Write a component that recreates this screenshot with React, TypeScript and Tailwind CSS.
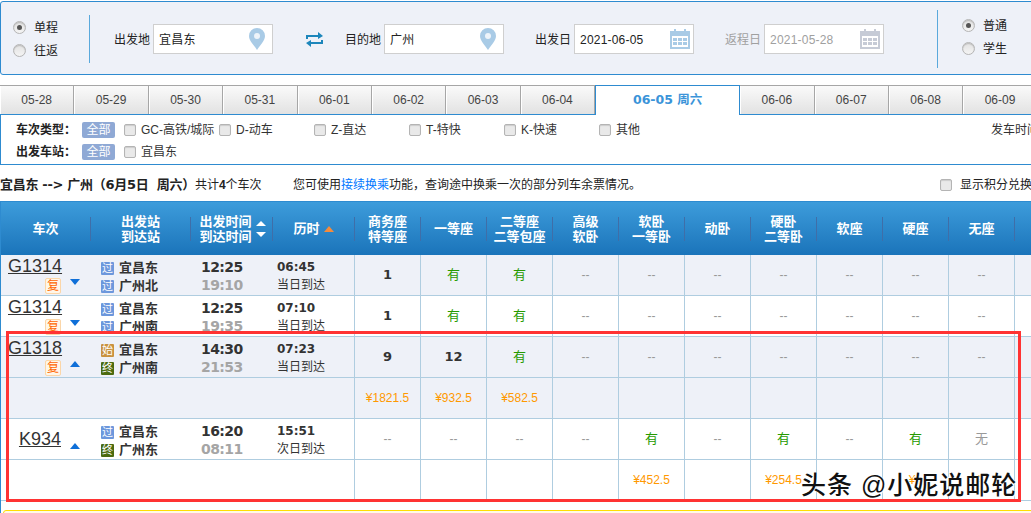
import React from 'react';

const FONT = "font-['Liberation_Sans','Noto_Sans_CJK_SC',sans-serif]";
const COLS = 'grid grid-cols-[90px_100px_82px_82px_repeat(11,66px)]';

const Radio = ({ on }: { on?: boolean }) => (
  <span className="flex h-[13px] w-[13px] items-center justify-center rounded-full border border-[#b5b5b5] bg-gradient-to-b from-[#e2e2e2] to-[#f4f4f4] shadow-[inset_0_1px_1px_#bbb]">
    {on && <span className="h-[5px] w-[5px] rounded-full bg-[#555]" />}
  </span>
);

const Checkbox = () => (
  <span className="block h-3 w-3 shrink-0 rounded-[2px] border border-[#b4b4b4] bg-[#e9e9e9] shadow-[inset_0_1px_1px_#ccc]" />
);

const Pin = () => (
  <svg width="16" height="22" viewBox="0 0 16 22" className="shrink-0">
    <path d="M8 0a8 8 0 0 0-8 8c0 5 5 9 8 14 3-5 8-9 8-14a8 8 0 0 0-8-8z" fill="#a9cbe6" />
    <circle cx="8" cy="8" r="3" fill="#eef4fa" />
  </svg>
);

const Calendar = ({ color }: { color: string }) => (
  <svg width="20" height="20" viewBox="0 0 20 20" className="shrink-0">
    <path d="M0 2h4V0h2v2h8V0h2v2h4v18H0z" fill={color} />
    <rect x="2" y="7" width="16" height="11" fill="#fff" />
    <path d="M3 9h4v3H3zM8 9h4v3H8zM13 9h4v3h-4zM3 13h4v3H3zM8 13h4v3H8zM13 13h4v3h-4z" fill={color} />
  </svg>
);

const Swap = () => (
  <svg width="17" height="15" viewBox="0 0 17 15">
    <path d="M0 7V3h12V0l5 4-5 3V5H2v2zM17 8v4H5v3L0 11l5-3v2h10V8z" fill="#1c86bb" />
  </svg>
);

const Field = ({ label, value, muted, calendar }: { label: string; value: string; muted?: boolean; calendar?: boolean }) => (
  <div className={`flex items-center gap-[3px] ${muted ? 'text-[#a0a0a0]' : 'text-[#222]'}`}>
    <span className="pt-[2px] text-xs">{label}</span>
    <div className="flex h-[30px] w-[120px] items-center justify-between border border-[#cfcfcf] bg-white pl-[5px] pr-[3px]">
      <span className="pt-[2px] text-xs tracking-[0.2px]">{value}</span>
      {calendar ? <Calendar color={muted ? '#c6cbd6' : '#a9cbe6'} /> : <span className="pr-1"><Pin /></span>}
    </div>
  </div>
);

const tabs = ['05-28', '05-29', '05-30', '05-31', '06-01', '06-02', '06-03', '06-04'];
const tabsAfter = ['06-06', '06-07', '06-08', '06-09'];

const Tab = ({ label }: { label: string }) => (
  <div className="flex h-full w-[74.4px] shrink-0 items-center justify-center border-r border-t border-[#a6a6a6] bg-gradient-to-b from-[#fafafa] to-[#e2e2e2] text-xs text-[#444] shadow-[inset_1px_0_0_#fff]">
    {label}
  </div>
);

const filters = ['GC-高铁/城际', 'D-动车', 'Z-直达', 'T-特快', 'K-快速', '其他'];

const AllBadge = () => (
  <span className="mr-[9px] ml-[1px] flex h-4 w-[33px] shrink-0 items-center justify-center rounded-[2px] bg-[#8fa9d5] text-xs text-white">全部</span>
);

const headers: string[][] = [
  ['车次'], ['出发站', '到达站'], ['出发时间', '到达时间'], ['历时'],
  ['商务座', '特等座'], ['一等座'], ['二等座', '二等包座'], ['高级', '软卧'], ['软卧', '一等卧'],
  ['动卧'], ['硬卧', '二等卧'], ['软座'], ['硬座'], ['无座'], [],
];

const Tag = ({ text, tone }: { text: string; tone: string }) => (
  <span className={`flex h-[13px] w-[13px] items-center justify-center rounded-[1px] text-[11px] font-normal leading-none text-white ${tone}`}>{text}</span>
);

const TONES: Record<string, string> = { 过: 'bg-[#6c97dc]', 始: 'bg-[#c9923f]', 终: 'bg-[#4a6a10]' };

type Train = {
  no: string; fu?: boolean; open?: boolean; from: string; fromTag: string; to: string; toTag: string;
  dep: string; arr: string; dur: string; day: string; seats: string[]; white?: boolean;
};

const trains: Train[] = [
  { no: 'G1314', fu: true, from: '宜昌东', fromTag: '过', to: '广州北', toTag: '过', dep: '12:25', arr: '19:10', dur: '06:45', day: '当日到达',
    seats: ['1', '有', '有', '--', '--', '--', '--', '--', '--', '--', ''] },
  { no: 'G1314', fu: true, white: true, from: '宜昌东', fromTag: '过', to: '广州南', toTag: '过', dep: '12:25', arr: '19:35', dur: '07:10', day: '当日到达',
    seats: ['1', '有', '有', '--', '--', '--', '--', '--', '--', '--', ''] },
  { no: 'G1318', fu: true, open: true, from: '宜昌东', fromTag: '始', to: '广州南', toTag: '终', dep: '14:30', arr: '21:53', dur: '07:23', day: '当日到达',
    seats: ['9', '12', '有', '--', '--', '--', '--', '--', '--', '--', ''] },
  { no: 'K934', open: true, white: true, from: '宜昌东', fromTag: '过', to: '广州东', toTag: '终', dep: '16:20', arr: '08:11', dur: '15:51', day: '次日到达',
    seats: ['--', '--', '--', '--', '有', '--', '有', '--', '有', '无', ''] },
];

const Seat = ({ value }: { value: string }) => {
  const isNum = /^\d+$/.test(value);
  const color = value === '有'
    ? 'text-[#269a00] text-[13px]'
    : isNum
      ? "font-bold text-[#333] text-[13px] font-['DejaVu_Sans',sans-serif]"
      : value === '无' ? 'text-[#999] text-[13px]' : 'text-[#999] text-xs';
  return (
    <div className={`flex items-center justify-center border-r border-[#afcde0] ${color}`}>{value}</div>
  );
};

const TrainRow = ({ t }: { t: Train }) => (
  <div className={`${COLS} h-[41px] border-b border-[#afcde0] ${t.white ? 'bg-white' : 'bg-[#eef1f8]'}`}>
    <div className={`relative ${t.fu ? '' : 'flex items-center'} pl-[7px] pr-[30px]`}>
      <div className={`text-right text-lg leading-[22px] text-[#333] underline ${t.fu ? '' : 'w-full'}`}>{t.no}</div>
      {t.fu && (
        <div className="mt-[1px] ml-[37px] flex h-4 w-4 items-center justify-center rounded-[2px] border border-[#fbd6a8] bg-[#fff6e8] text-xs leading-none text-[#f60]">复</div>
      )}
      <span className={`absolute left-[69px] top-[24px] border-x-[5px] border-x-transparent ${t.open ? 'border-b-[6px] border-b-[#0f6fd8]' : 'border-t-[6px] border-t-[#0f6fd8]'}`} />
    </div>
    <div className="pl-[10px] pt-1 text-[13px] font-bold leading-[18px] text-[#333]">
      <div className="flex items-center gap-[5px]"><Tag text={t.fromTag} tone={TONES[t.fromTag]} />{t.from}</div>
      <div className="flex items-center gap-[5px]"><Tag text={t.toTag} tone={TONES[t.toTag]} />{t.to}</div>
    </div>
    <div className="pl-[10px] pt-[3px] font-['DejaVu_Sans','Liberation_Sans',sans-serif] text-[14px] font-bold leading-[18px] tracking-[-0.6px]">
      <div className="text-[#333]">{t.dep}</div>
      <div className="text-[#a5a5a5]">{t.arr}</div>
    </div>
    <div className="border-r border-[#afcde0] pl-[4px] pt-[3px] text-xs leading-[18px] text-[#333]">
      <div className="font-['DejaVu_Sans','Liberation_Sans',sans-serif] font-bold">{t.dur}</div>
      <div>{t.day}</div>
    </div>
    {t.seats.map((s, i) => <Seat key={i} value={s} />)}
  </div>
);

const PriceRow = ({ prices, white }: { prices: string[]; white?: boolean }) => (
  <div className={`${COLS} h-[41px] border-b border-[#afcde0] ${white ? 'bg-white' : 'bg-[#eef1f8]'}`}>
    <div className="col-span-4 border-r border-[#afcde0]" />
    {prices.map((p, i) => (
      <div key={i} className="flex items-center justify-center border-r border-[#afcde0] text-xs text-[#f90]">{p}</div>
    ))}
  </div>
);

export default function App() {
  return (
    <div className={`relative h-[513px] w-[1031px] overflow-hidden bg-white ${FONT}`}>
      {/* search panel */}
      <div className="ml-0 mt-px flex h-[74px] w-[1040px] items-center rounded-l-[3px] border border-[#2e8bd0] bg-[#eef1f8] pt-[2px] text-xs">
        <div className="flex w-[88px] flex-col gap-[9px] pl-3 text-[#222]">
          <label className="flex h-[14px] items-center gap-2"><Radio on />单程</label>
          <label className="flex h-[14px] items-center gap-2"><Radio />往返</label>
        </div>
        <div className="h-12 w-px bg-[#5aa9dc]" />
        <div className="ml-6 flex items-center">
          <Field label="出发地" value="宜昌东" />
          <div className="ml-[33px] mr-[22px] flex items-center"><Swap /></div>
          <Field label="目的地" value="广州" />
          <div className="ml-[31px]"><Field label="出发日" value="2021-06-05" calendar /></div>
          <div className="ml-[31px]"><Field label="返程日" value="2021-05-28" muted calendar /></div>
        </div>
        <div className="ml-[53px] h-[58px] w-px bg-[#5aa9dc]" />
        <div className="mb-[4px] ml-6 flex flex-col gap-[9px] text-[#222]">
          <label className="flex h-[14px] items-center gap-2"><Radio on />普通</label>
          <label className="flex h-[14px] items-center gap-2"><Radio />学生</label>
        </div>
      </div>

      {/* date tabs */}
      <div className="mt-[10px] flex h-[29px] w-[1100px]">
        {tabs.map((d) => <Tab key={d} label={d} />)}
        <div className="z-10 -mb-px flex h-[30px] w-[145px] shrink-0 items-center justify-center border-x border-t border-[#2e8bd0] bg-white font-['DejaVu_Sans','Noto_Sans_CJK_SC',sans-serif] text-[12.5px] font-bold text-[#3b94d9]">06-05 周六</div>
        {tabsAfter.map((d) => <Tab key={d} label={d} />)}
      </div>

      {/* filters */}
      <div className="flex h-[51px] w-[1040px] flex-col justify-center gap-[6px] border-y border-l border-[#2e8bd0] pl-[15px] pt-[3px] text-xs text-[#333]">
        <div className="flex h-4 items-center">
          <span className="w-[65px] shrink-0 font-bold text-[#222]">车次类型：</span>
          <AllBadge />
          {filters.map((f) => (
            <label key={f} className="flex w-[95px] shrink-0 items-center gap-[5px] whitespace-nowrap"><Checkbox />{f}</label>
          ))}
          <span className="ml-[297px] w-[60px] shrink-0 whitespace-nowrap">发车时间</span>
        </div>
        <div className="flex h-4 items-center">
          <span className="w-[65px] shrink-0 font-bold text-[#222]">出发车站：</span>
          <AllBadge />
          <label className="flex items-center gap-[5px]"><Checkbox />宜昌东</label>
        </div>
      </div>

      {/* result summary */}
      <div className="flex h-[36px] w-[1100px] items-center pt-[3px] text-xs text-[#222]">
        <span className="w-[293px] whitespace-pre">
          <b className="font-['DejaVu_Sans','Noto_Sans_CJK_SC',sans-serif] text-[13px] tracking-[-0.3px]">宜昌东 --&gt; 广州（6月5日  周六）</b>共计<b>4</b>个车次
        </span>
        <span className="w-[647px]">您可使用<a className="text-[#0077ff]">接续换乘</a>功能，查询途中换乘一次的部分列车余票情况。</span>
        <label className="flex items-center gap-2 whitespace-nowrap"><Checkbox />显示积分兑换</label>
      </div>

      {/* ticket table */}
      <div className="h-[312px] w-[1100px] border-l border-[#2e8bd0]">
        <div className={`${COLS} h-[54px] items-center border-t border-[#2e8bd0] bg-gradient-to-b from-[#3d9cdb] to-[#1a74ba] text-[13px] font-bold leading-[15px] text-white`}>
          {headers.map((h, i) => (
            <div key={i} className={`flex h-6 items-center justify-center gap-[4px] border-r border-[#3f6ea8] text-center ${i === 2 ? 'pl-[2px]' : ''}`}>
              <div>{h.map((l) => <div key={l} className="whitespace-nowrap">{l}</div>)}</div>
              {i === 2 && (
                <div className="flex flex-col gap-[6px]">
                  <span className="block border-x-[5px] border-b-[5px] border-x-transparent border-b-white" />
                  <span className="block border-x-[5px] border-t-[5px] border-x-transparent border-t-white" />
                </div>
              )}
              {i === 3 && <span className="block border-x-[5px] border-b-[6px] border-x-transparent border-b-[#f58b3c]" />}
            </div>
          ))}
        </div>
        <TrainRow t={trains[0]} />
        <TrainRow t={trains[1]} />
        <TrainRow t={trains[2]} />
        <PriceRow prices={['¥1821.5', '¥932.5', '¥582.5', '', '', '', '', '', '', '', '']} />
        <TrainRow t={trains[3]} />
        <PriceRow white prices={['', '', '', '', '¥452.5', '', '¥254.5', '', '¥1', '¥', '']} />
      </div>

      {/* yellow notice edge */}
      <div className="ml-[3px] mt-[-3px] h-5 w-[1040px] rounded-tl-[3px] border border-[#ffdd00] bg-[#fffbe5]" />

      {/* annotation + watermark over the screenshot */}
      <div className="pointer-events-none absolute left-[6px] top-[331px] h-[171px] w-[1015px] border-[3px] border-[#ff3333]" />
      <div className="pointer-events-none absolute left-[801px] top-[469px] whitespace-nowrap text-[25px] font-medium leading-[32px] tracking-[1px] text-[#111] [text-shadow:0_0_2px_#fff,1px_1px_1px_#fff,-1px_-1px_1px_#fff]">
        头条 @小妮说邮轮
      </div>
    </div>
  );
}
